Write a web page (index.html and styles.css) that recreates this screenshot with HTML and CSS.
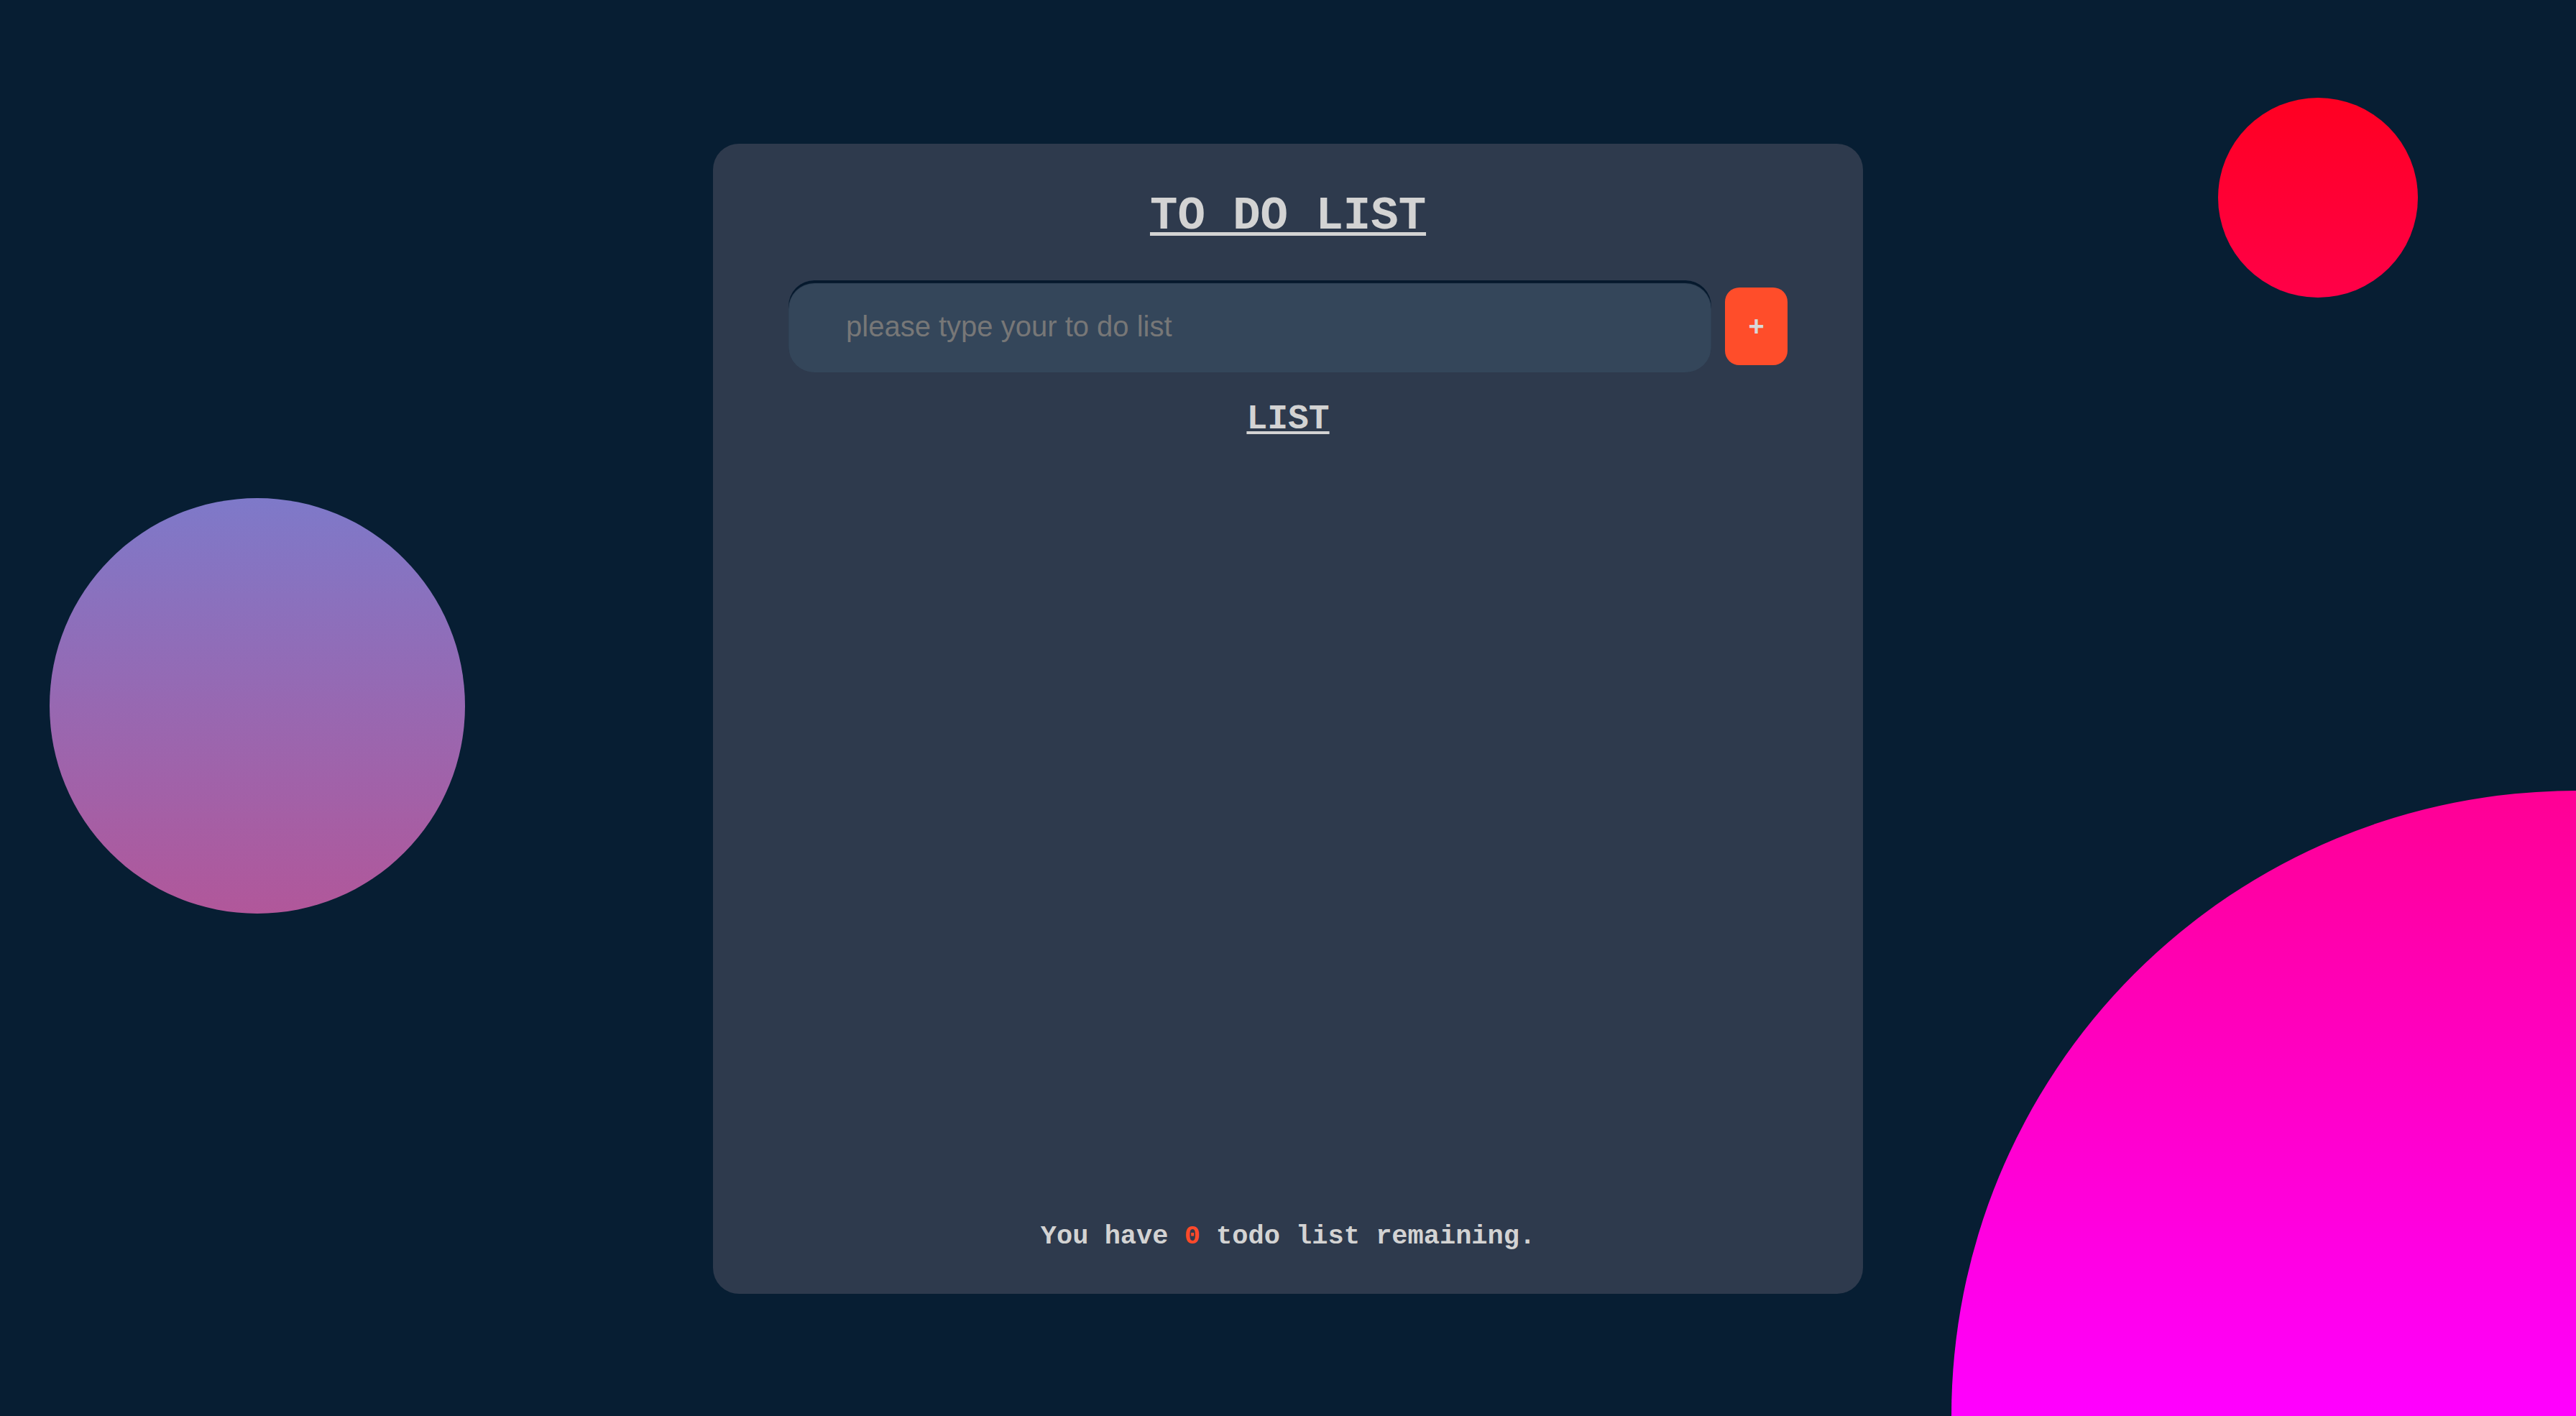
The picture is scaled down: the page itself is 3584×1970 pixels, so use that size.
FILE: index.html
```html
<!DOCTYPE html>
<html lang="en">
<head>
<meta charset="utf-8">
<title>To Do List</title>
<link rel="stylesheet" href="styles.css">
</head>
<body>
<div class="decor">
  <div class="blob blob-purple"></div>
  <div class="blob blob-red"></div>
  <div class="blob-pink"></div>
</div>

<main class="card">
  <h1 class="title">TO DO LIST</h1>
  <form class="add-row" onsubmit="return false;">
    <input class="todo-input" type="text" placeholder="please type your to do list">
    <button class="add-btn" type="submit">+</button>
  </form>
  <h2 class="list-title">LIST</h2>
  <ul class="todo-list"></ul>
  <p class="remaining">You have <span class="count">0</span> todo list remaining.</p>
</main>
</body>
</html>
```

FILE: styles.css
```css
html, body {
  margin: 0;
  padding: 0;
}

body {
  background: #071e33;
  height: 100vh;
  overflow: hidden;
  position: relative;
  font-family: "Liberation Mono", "Courier New", monospace;
}

.decor {
  position: absolute;
  inset: 0;
  overflow: hidden;
}

.blob {
  position: absolute;
  border-radius: 50%;
}

.blob-purple {
  left: 69px;
  top: 693px;
  width: 578px;
  height: 578px;
  background: linear-gradient(to bottom, #7e79c9, #b1579a);
}

.blob-red {
  left: 3086px;
  top: 136px;
  width: 278px;
  height: 278px;
  background: linear-gradient(to bottom, #ff0021, #ff0048);
}

.blob-pink {
  position: absolute;
  right: 0;
  bottom: 0;
  width: 869px;
  height: 870px;
  border-top-left-radius: 869px 870px;
  background: linear-gradient(to bottom, #ff0094 0%, #ff00ff 100%);
}

.card {
  position: relative;
  z-index: 1;
  box-sizing: border-box;
  width: 1600px;
  height: 1600px;
  margin: 200px auto 0;
  padding: 0 105px 59px;
  background: #2e3a4d;
  border-radius: 36px;
  display: flex;
  flex-direction: column;
  align-items: stretch;
}

.title {
  margin: 65px 0 0;
  font-size: 64px;
  line-height: 72px;
  font-weight: bold;
  text-align: center;
  color: #d3d3d3;
  text-decoration: underline;
  text-decoration-thickness: 5px;
  text-underline-offset: 5px;
}

.add-row {
  margin: 53px 0 0;
  display: flex;
  align-items: center;
  gap: 19px;
}

.todo-input {
  box-sizing: border-box;
  flex: 1;
  height: 128px;
  margin: 0;
  padding: 0 0 0 80px;
  border: none;
  outline: none;
  border-radius: 36px;
  background: #34465a;
  box-shadow: inset 0 4px 1px #06192d;
  font-family: "Liberation Sans", Arial, sans-serif;
  font-size: 40px;
  color: #d3d3d3;
}

.todo-input::placeholder {
  color: #777777;
  opacity: 1;
}

.add-btn {
  width: 87px;
  height: 108px;
  margin: 0;
  padding: 0;
  border: none;
  border-radius: 20px;
  background: #ff4d2a;
  color: #d8d8d8;
  font-family: "Liberation Sans", Arial, sans-serif;
  font-size: 38px;
  font-weight: bold;
  line-height: 1;
  cursor: pointer;
}

.list-title {
  margin: 38px 0 0;
  font-size: 48px;
  line-height: 54px;
  font-weight: bold;
  text-align: center;
  color: #d3d3d3;
  text-decoration: underline;
  text-decoration-thickness: 4px;
  text-underline-offset: 4px;
}

.todo-list {
  flex: 1;
  margin: 0;
  padding: 0;
  list-style: none;
}

.remaining {
  margin: 0;
  font-size: 37px;
  line-height: 42px;
  font-weight: bold;
  text-align: center;
  color: #d3d3d3;
}

.count {
  color: #ff4a2a;
}
```
